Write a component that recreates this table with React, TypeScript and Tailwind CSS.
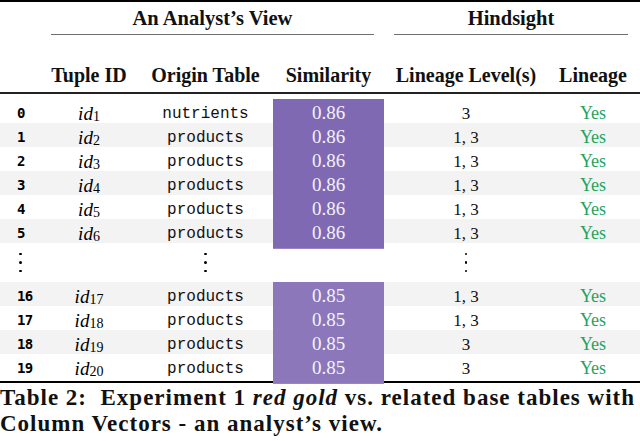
import React from "react";

type Row = {
  i: number;
  id: number;
  table: string;
  sim: string;
  levels: string;
  stripe: boolean;
};

const topRows: Row[] = [
  { i: 0, id: 1, table: "nutrients", sim: "0.86", levels: "3", stripe: false },
  { i: 1, id: 2, table: "products", sim: "0.86", levels: "1, 3", stripe: true },
  { i: 2, id: 3, table: "products", sim: "0.86", levels: "1, 3", stripe: false },
  { i: 3, id: 4, table: "products", sim: "0.86", levels: "1, 3", stripe: true },
  { i: 4, id: 5, table: "products", sim: "0.86", levels: "1, 3", stripe: false },
  { i: 5, id: 6, table: "products", sim: "0.86", levels: "1, 3", stripe: true },
];

const bottomRows: Row[] = [
  { i: 16, id: 17, table: "products", sim: "0.85", levels: "1, 3", stripe: true },
  { i: 17, id: 18, table: "products", sim: "0.85", levels: "1, 3", stripe: false },
  { i: 18, id: 19, table: "products", sim: "0.85", levels: "3", stripe: true },
  { i: 19, id: 20, table: "products", sim: "0.85", levels: "3", stripe: false },
];

const serif = "[font-family:Liberation_Serif,serif]";
const cols = "grid grid-cols-[40px_98px_135px_111px_164px_90px]";

function DataRow({ row }: { row: Row }) {
  const purple = row.sim === "0.86" ? "bg-[#7f69b3]" : "bg-[#8b77ba]";
  return (
    <div className={`${cols} h-[24px] ${row.stripe ? "bg-[#f3f3f3]" : "bg-white"}`}>
      <div className="flex items-center pl-[17px] [font-family:DejaVu_Sans_Mono,monospace] text-[14px] tracking-[-0.6px] font-bold text-black">
        {row.i}
      </div>
      <div className={`flex items-center justify-center ${serif} text-[19px] text-black`}>
        <span className="italic">id</span>
        <span className="relative top-[3px] text-[14px]">{row.id}</span>
      </div>
      <div className="flex items-center justify-center [font-family:Liberation_Mono,monospace] text-[16px] text-[#111]">
        {row.table}
      </div>
      <div
        className={`flex items-center justify-center ${purple} border-b border-[#9886c4] ${serif} text-[19px] text-[#f4f2fa]`}
      >
        {row.sim}
      </div>
      <div className={`flex items-center justify-center ${serif} text-[17px] text-[#111]`}>
        {row.levels}
      </div>
      <div className={`flex items-center justify-center ${serif} text-[18px] text-[#1fa55c]`}>
        Yes
      </div>
    </div>
  );
}

function Dots() {
  return (
    <div className="flex flex-col items-center gap-[6px]">
      <span className="block h-[2.5px] w-[2.5px] rounded-full bg-black" />
      <span className="block h-[2.5px] w-[2.5px] rounded-full bg-black" />
      <span className="block h-[2.5px] w-[2.5px] rounded-full bg-black" />
    </div>
  );
}

export default function App() {
  return (
    <div className="w-[640px] h-[441px] overflow-hidden bg-white">
      <div className="h-[2px] bg-black" />

      {/* group headers */}
      <div className={`${cols} h-[32px]`}>
        <div />
        <div className={`col-span-3 pt-[5px] pl-[11px] pr-[10px] text-center ${serif} text-[20.5px] leading-[22px] font-bold text-[#111]`}>
          An Analyst’s View
        </div>
        <div className={`col-span-2 pt-[5px] text-center ${serif} text-[20.5px] leading-[22px] font-bold text-[#111]`}>
          Hindsight
        </div>
      </div>
      <div className={`${cols} h-[1px]`}>
        <div />
        <div className="col-span-3 ml-[11px] mr-[10px] bg-[#6f6f6f]" />
        <div className="col-span-2 ml-[10px] mr-[10px] bg-[#6f6f6f]" />
      </div>

      {/* column headers */}
      <div className={`${cols} h-[57px] items-end pb-[6px] ${serif} text-[20px] leading-[22px] font-bold text-[#111]`}>
        <div />
        <div className="text-center">Tuple ID</div>
        <div className="text-center">Origin Table</div>
        <div className="text-center">Similarity</div>
        <div className="text-center">Lineage Level(s)</div>
        <div className="text-center">Lineage</div>
      </div>
      <div className="h-[1.5px] bg-[#222]" />
      <div className="h-[5.5px]" />

      {topRows.map((r) => (
        <DataRow key={r.i} row={r} />
      ))}

      <div className={`${cols} h-[39px] items-center`}>
        <div className="flex justify-start pl-[19px]">
          <Dots />
        </div>
        <div />
        <div className="flex justify-center">
          <Dots />
        </div>
        <div />
        <div className="flex justify-center">
          <Dots />
        </div>
        <div />
      </div>

      {bottomRows.map((r) => (
        <DataRow key={r.i} row={r} />
      ))}

      <div className="h-[3px]" />
      <div className="h-[2px] bg-black" />

      <div className={`pt-[2px] ${serif} text-[23px] leading-[26px] tracking-[1px] font-bold text-[#111] whitespace-nowrap`}>
        <div>
          Table 2:&nbsp; Experiment 1 <span className="italic">red gold</span> vs. related base tables with
        </div>
        <div>Column Vectors - an analyst’s view.</div>
      </div>
    </div>
  );
}
